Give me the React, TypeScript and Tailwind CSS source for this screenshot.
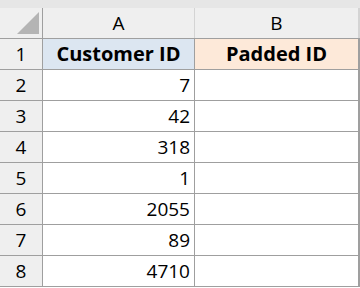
import React from 'react';

const rows = [
  { n: 2, v: '7' },
  { n: 3, v: '42' },
  { n: 4, v: '318' },
  { n: 5, v: '1' },
  { n: 6, v: '2055' },
  { n: 7, v: '89' },
  { n: 8, v: '4710' },
];

const font = { fontFamily: '"Open Sans", "Noto Sans", sans-serif' };

const App: React.FC = () => {
  return (
    <div className="w-[360px] h-[288px] bg-white overflow-hidden text-black" style={font}>
      <div className="h-[8px] bg-[#e6e6e6]" />
      {/* column headers */}
      <div className="flex h-[31px] bg-[#efefef] border-b border-[#9f9f9f]">
        <div className="w-[43px] border-r border-[#9f9f9f] relative">
          <svg className="absolute left-[17px] top-[4px]" width="22" height="22" viewBox="0 0 22 22">
            <polygon points="22,0 22,22 0,22" fill="#b4b4b4" />
          </svg>
        </div>
        <div className="w-[152px] border-r border-[#d4d4d4] flex items-center justify-center text-[19px]">A</div>
        <div className="w-[165px] border-r-2 border-[#d4d4d4] flex items-center justify-center text-[19px]">B</div>
      </div>
      {/* row 1 */}
      <div className="flex h-[31px] border-b border-[#9f9f9f]">
        <div className="w-[43px] bg-[#efefef] border-r border-[#9f9f9f] flex items-center justify-center text-[19px]">1</div>
        <div className="w-[152px] bg-[#dce6f1] border-r border-[#9f9f9f] flex items-center justify-center text-[20px] font-bold">Customer ID</div>
        <div className="w-[165px] bg-[#fde9d9] border-r-2 border-[#9f9f9f] flex items-center justify-center text-[20px] font-bold">Padded ID</div>
      </div>
      {rows.map((r) => (
        <div key={r.n} className="flex h-[31px] border-b border-[#9f9f9f]">
          <div className="w-[43px] bg-[#efefef] border-r border-[#9f9f9f] flex items-center justify-center text-[19px]">{r.n}</div>
          <div className="w-[152px] border-r border-[#9f9f9f] flex items-center justify-end pr-[4px] text-[19px]">{r.v}</div>
          <div className="w-[165px] border-r-2 border-[#9f9f9f]" />
        </div>
      ))}
    </div>
  );
};

export default App;
